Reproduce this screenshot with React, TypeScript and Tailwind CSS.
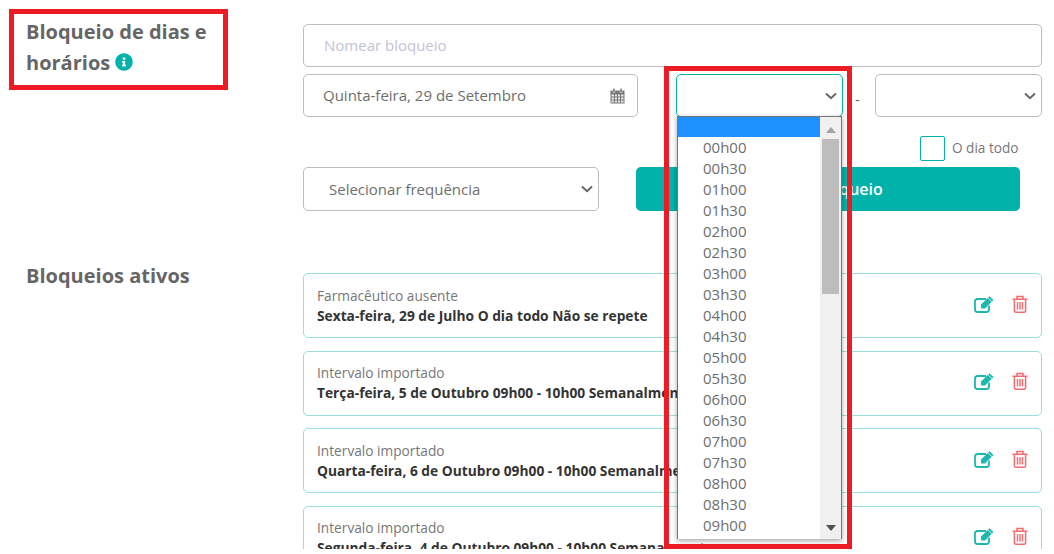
import { FaInfoCircle } from 'react-icons/fa';

const times = [
  '00h00', '00h30', '01h00', '01h30', '02h00', '02h30', '03h00', '03h30', '04h00', '04h30',
  '05h00', '05h30', '06h00', '06h30', '07h00', '07h30', '08h00', '08h30', '09h00',
];

const blocks = [
  { name: 'Farmacêutico ausente', detail: 'Sexta-feira, 29 de Julho O dia todo Não se repete' },
  { name: 'Intervalo importado', detail: 'Terça-feira, 5 de Outubro 09h00 - 10h00 Semanalmente' },
  { name: 'Intervalo importado', detail: 'Quarta-feira, 6 de Outubro 09h00 - 10h00 Semanalmente' },
  { name: 'Intervalo importado', detail: 'Segunda-feira, 4 de Outubro 09h00 - 10h00 Semanalmente' },
];

function Chevron() {
  return (
    <svg width="12" height="8" viewBox="0 0 12 8" className="shrink-0">
      <path d="M1 1.5 L6 6.2 L11 1.5" fill="none" stroke="#666" strokeWidth="2" />
    </svg>
  );
}

function CalendarIcon() {
  return (
    <svg width="15" height="16" viewBox="0 0 15 16" className="shrink-0">
      <path d="M0.5 2.5h14v13h-14z" fill="#777" />
      <path
        d="M1.5 6.5h2.5v2h-2.5zM5 6.5h2v2h-2zM8 6.5h2v2h-2zM11 6.5h2.5v2h-2.5zM1.5 9.5h2.5v2h-2.5zM5 9.5h2v2h-2zM8 9.5h2v2h-2zM11 9.5h2.5v2h-2.5zM1.5 12.5h2.5v2h-2.5zM5 12.5h2v2h-2zM8 12.5h2v2h-2zM11 12.5h2.5v2h-2.5z"
        fill="#e8e8e8"
      />
      <path d="M3 0.5h2v4h-2zM10 0.5h2v4h-2z" fill="#666" stroke="#fff" strokeWidth="0.5" />
    </svg>
  );
}

function EditIcon() {
  return (
    <svg width="21" height="18" viewBox="0 0 21 18" className="shrink-0">
      <path
        d="M15 10.5v4a2.5 2.5 0 0 1-2.5 2.5H3.5A2.5 2.5 0 0 1 1 14.5V6.5A2.5 2.5 0 0 1 3.5 4H12"
        fill="none"
        stroke="#1cb8b0"
        strokeWidth="1.8"
      />
      <path d="M7 9.5 L15.5 1.2 L19.5 5 L11 13.5 L7 13.5 Z" fill="#1cb8b0" />
      <path d="M14 2.8 L17.9 6.6" stroke="#fff" strokeWidth="0.8" />
    </svg>
  );
}

function TrashIcon() {
  return (
    <svg width="16" height="18" viewBox="0 0 16 18" className="shrink-0">
      <path
        d="M0.5 4.2h15M5 4V1.6h6V4M2.4 4.2v11.6a1.4 1.4 0 0 0 1.4 1.4h8.4a1.4 1.4 0 0 0 1.4-1.4V4.2"
        fill="none"
        stroke="#f46a6f"
        strokeWidth="1.5"
      />
      <path d="M5.5 7v7.5M8 7v7.5M10.5 7v7.5" stroke="#f46a6f" strokeWidth="1.4" />
    </svg>
  );
}

function TimeDropdown() {
  return (
    <div className="absolute left-[677px] top-[116px] w-[165px] h-[423px] flex bg-white border-x border-t border-[#767676] shadow-[0_2px_5px_rgba(0,0,0,0.35)] overflow-hidden">
      <div className="flex-1">
        <div className="h-[20px] bg-[#1e90ff]" />
        {times.map((t) => (
          <div key={t} className="h-[21px] pl-[25px] text-[15px] leading-[21px] text-[#6e6e6e]">
            {t}
          </div>
        ))}
      </div>
      <div className="w-[21px] bg-[#f0f0f0] flex flex-col items-center">
        <svg width="10" height="6" viewBox="0 0 10 6" className="mt-[10px] shrink-0">
          <path d="M5 0 L10 6 L0 6 Z" fill="#a3a3a3" />
        </svg>
        <div className="mt-[6px] w-[17px] h-[155px] bg-[#bdbdbd]" />
        <div className="flex-1" />
        <svg width="10" height="6" viewBox="0 0 10 6" className="mb-[8px] shrink-0">
          <path d="M0 0 L10 0 L5 6 Z" fill="#505050" />
        </svg>
      </div>
    </div>
  );
}

export default function App() {
  return (
    <div className="h-[554px] w-[1054px] overflow-hidden bg-white">
      <div className="relative h-[549px] overflow-hidden font-['Open_Sans',sans-serif] text-[#666]">
        <div className="flex">
          {/* Left labels */}
          <div className="w-[303px] shrink-0 pl-[26px]">
            <h2 className="pt-[16px] text-[20px] leading-[31px] font-bold text-[#666] w-[200px]">
              Bloqueio de dias e horários{' '}
              <FaInfoCircle className="inline-block align-[-1px] text-[#00b2aa]" size={18} />
            </h2>
            <h2 className="mt-[182px] text-[20px] leading-[31px] font-bold text-[#666]">Bloqueios ativos</h2>
          </div>

          {/* Form + list */}
          <div className="w-[739px] shrink-0 pt-[24px]">
            <div className="h-[43px] flex items-center rounded-[5px] border border-[#bdbdbd] pl-[20px] text-[15px] text-[#c3c3d6]">
              Nomear bloqueio
            </div>

            <div className="mt-[7px] flex items-center">
              <div className="w-[335px] h-[43px] flex items-center justify-between rounded-[5px] border border-[#bdbdbd] pl-[19px] pr-[12px] text-[15px] text-[#6e6e6e]">
                Quinta-feira, 29 de Setembro
                <CalendarIcon />
              </div>
              <div className="ml-[38px] w-[167px] h-[43px] flex items-center justify-end rounded-[5px] border border-[#00b2aa] pr-[5px] shadow-[0_2px_6px_rgba(0,0,0,0.12)]">
                <Chevron />
              </div>
              <span className="w-[32px] pt-[8px] pl-[12px] text-[15px] text-[#666]">-</span>
              <div className="w-[167px] h-[43px] flex items-center justify-end rounded-[5px] border border-[#bdbdbd] pr-[5px]">
                <Chevron />
              </div>
            </div>

            <div className="mt-[19px] flex items-center pl-[617px]">
              <div className="w-[25px] h-[25px] rounded-[2px] border border-[#00b2aa]" />
              <span className="ml-[7px] text-[13.6px] text-[#777]">O dia todo</span>
            </div>

            <div className="mt-[6px] flex">
              <div className="w-[296px] h-[44px] flex items-center justify-between rounded-[5px] border border-[#bdbdbd] pl-[25px] pr-[5px] text-[15px] text-[#6e6e6e]">
                Selecionar frequência
                <Chevron />
              </div>
              <button className="ml-[37px] w-[384px] h-[44px] rounded-[5px] bg-[#00b2aa] text-[16px] font-semibold text-white">
                Criar bloqueio
              </button>
            </div>

            <div className="mt-[62px] flex flex-col gap-[12.5px]">
              {blocks.map((b, i) => (
                <div
                  key={i}
                  className="h-[65px] shrink-0 flex items-center justify-between rounded-[5px] border border-[#9adfd9] pl-[13px] pr-[12px]"
                >
                  <div className="leading-[20px]">
                    <div className="text-[13.7px] text-[#777]">{b.name}</div>
                    <div className="text-[13.75px] font-bold text-[#333]">{b.detail}</div>
                  </div>
                  <div className="flex items-center gap-[17px] mb-[4px] mr-[1px]">
                    <EditIcon />
                    <TrashIcon />
                  </div>
                </div>
              ))}
            </div>
          </div>
        </div>

        <TimeDropdown />

        {/* Red annotation frames */}
        <div className="absolute left-[9px] top-[9px] w-[219px] h-[81px] border-[5px] border-[#ed1c24]" />
        <div className="absolute left-[664px] top-[66px] w-[188px] h-[483px] border-[5px] border-[#ed1c24]" />
      </div>
    </div>
  );
}
